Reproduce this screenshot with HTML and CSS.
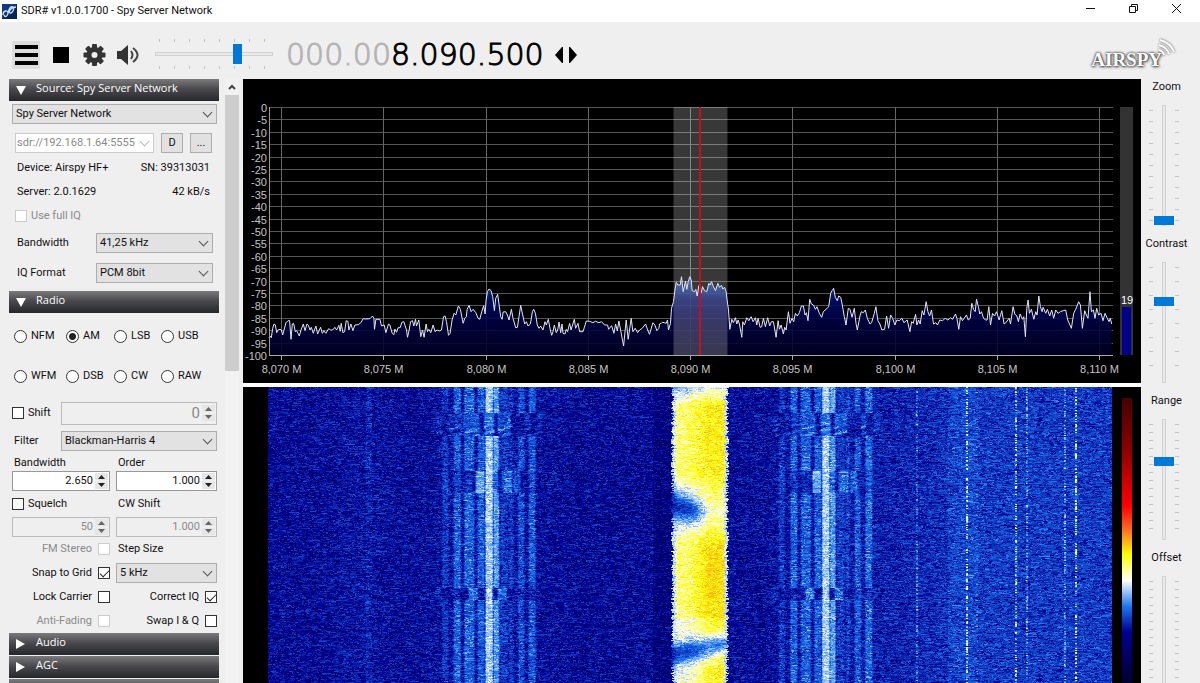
FILE: index.html
```html
<!DOCTYPE html>
<html lang="en">

<head>
    <meta charset="UTF-8">
    <title>SDR# v1.0.0.1700 - Spy Server Network</title>
    <link rel="stylesheet" href="styles.css">
</head>

<body>
    <svg width="0" height="0" class="defs">
        <symbol id="arrows" viewBox="0 0 13 16">
            <path d="M0 0H13V16H0Z" fill="#e6e6e6" />
            <path d="M0 8H13" stroke="#f8f8f8" />
            <path d="M3 6L6.500 2L10 6ZM3 10L6.500 14L10 10Z" fill="currentColor" />
        </symbol>
    </svg>
    <header class="titlebar">
        <svg class="app-icon" width="15" height="15" viewBox="0 0 15 15">
            <rect width="15" height="15" fill="#123a80" />
            <path d="M0 15L15 0V15Z" fill="#0b2458" />
            <path d="M1 11C1 6 6 6 6 9S3 14 2 11M6 9C7 4 9 2 11 3S10 10 8 9S9 3 14 3" fill="none" stroke="#cfe4ff" stroke-width="1.3" />
        </svg>
        <h1 class="app-title">SDR# v1.0.0.1700 - Spy Server Network</h1>
        <div class="window-buttons">
            <button type="button" aria-label="Minimize"><svg width="11" height="11" viewBox="0 0 11 11"><path d="M1 5.5H10" /></svg></button>
            <button type="button" aria-label="Restore"><svg width="11" height="11" viewBox="0 0 11 11"><path d="M1.500 3.500H7.500V9.500H1.500ZM3.500 3.500V1.500H9.500V7.500H7.500" /></svg></button>
            <button type="button" aria-label="Close"><svg width="11" height="11" viewBox="0 0 11 11"><path d="M1 1L10 10M10 1L1 10" /></svg></button>
        </div>
    </header>

    <div class="toolbar">
        <button class="tool menu" type="button" aria-label="Menu"><svg width="28" height="28" viewBox="0 0 28 28"><path d="M3 4H26V8H3ZM3 12H26V16H3ZM3 20H26V24H3Z" /></svg></button>
        <button class="tool" type="button" aria-label="Stop"><svg width="28" height="28" viewBox="0 0 28 28"><path d="M7 6H23V22H7Z" /></svg></button>
        <button class="tool" type="button" aria-label="Settings">
            <svg width="28" height="28" viewBox="0 0 28 28" fill="#333">
                <rect x="12" y="3" width="5" height="22" rx="1" />
                <rect x="12" y="3" width="5" height="22" rx="1" transform="rotate(45 14.500 14)" />
                <rect x="12" y="3" width="5" height="22" rx="1" transform="rotate(90 14.500 14)" />
                <rect x="12" y="3" width="5" height="22" rx="1" transform="rotate(135 14.500 14)" />
                <circle cx="14.500" cy="14" r="8" />
                <circle cx="14.500" cy="14" r="3" fill="#efefef" />
            </svg>
        </button>
        <button class="tool" type="button" aria-label="Mute">
            <svg width="28" height="28" viewBox="0 0 28 28">
                <path d="M3 10H7L14 4V24L7 18H3Z" fill="#333" />
                <path d="M17 10Q20 14 17 18M19 7Q28 14 19 21" fill="none" stroke="#444" stroke-width="2" />
            </svg>
        </button>
        <div class="volume"><input type="range" value="72" aria-label="Volume"></div>
        <div class="frequency"><span>000.00</span>8.090.500</div>
        <button class="tool step" type="button" aria-label="Tuning style"><svg width="24" height="18" viewBox="0 0 24 18"><path d="M9 1V17H8L1 9L8 1ZM15 1V17H16L23 9L16 1Z" /></svg></button>
        <div class="brand">AIRSPY
            <svg width="20" height="20" viewBox="0 0 20 20"><path d="M3 12Q7 13 8 17M3 7Q11 9 13 16M4 2Q15 5 18 14" /></svg>
        </div>
    </div>

    <main class="workspace">
        <aside class="sidebar">
            <div class="panels">
                <h2 class="panel-title open">Source: Spy Server Network</h2>
                <div class="panel source">
                    <div class="select"><select aria-label="Source"><option>Spy Server Network</option></select></div>
                    <div class="address">
                        <div class="select off"><select aria-label="Server address" disabled><option>sdr://192.168.1.64:5555</option></select></div>
                        <button type="button">D</button>
                        <button type="button">...</button>
                    </div>
                    <div class="info"><span>Device: Airspy HF+</span><span>SN: 39313031</span></div>
                    <div class="info"><span>Server: 2.0.1629</span><span>42 kB/s</span></div>
                    <label class="info check off"><input type="checkbox" disabled>Use full IQ</label>
                    <div class="field"><label for="iqBandwidth">Bandwidth</label>
                        <div class="select"><select id="iqBandwidth"><option>41,25 kHz</option></select></div>
                    </div>
                    <div class="field"><label for="iqFormat">IQ Format</label>
                        <div class="select"><select id="iqFormat"><option>PCM 8bit</option></select></div>
                    </div>
                </div>

                <h2 class="panel-title open">Radio</h2>
                <div class="panel radio">
                    <div class="modes">
                        <label><input type="radio" name="mode">NFM</label>
                        <label><input type="radio" name="mode" checked>AM</label>
                        <label><input type="radio" name="mode">LSB</label>
                        <label><input type="radio" name="mode">USB</label>
                        <label><input type="radio" name="mode">WFM</label>
                        <label><input type="radio" name="mode">DSB</label>
                        <label><input type="radio" name="mode">CW</label>
                        <label><input type="radio" name="mode">RAW</label>
                    </div>
                    <div class="wide">
                        <label class="check"><input type="checkbox">Shift</label>
                        <div class="spin big off"><input type="text" value="0" aria-label="Shift value" disabled><svg><use href="#arrows" /></svg></div>
                    </div>
                    <div class="wide">
                        <label class="indent" for="filter">Filter</label>
                        <div class="select"><select id="filter"><option>Blackman-Harris 4</option></select></div>
                    </div>
                    <div class="pair caption"><label class="indent" for="bw">Bandwidth</label><label class="indent" for="order">Order</label></div>
                    <div class="pair">
                        <div class="spin"><input id="bw" type="text" value="2.650"><svg><use href="#arrows" /></svg></div>
                        <div class="spin"><input id="order" type="text" value="1.000"><svg><use href="#arrows" /></svg></div>
                    </div>
                    <div class="pair squelch"><label class="check"><input type="checkbox">Squelch</label><label class="indent" for="cw">CW Shift</label></div>
                    <div class="pair">
                        <div class="spin off"><input type="text" value="50" aria-label="Squelch level" disabled><svg><use href="#arrows" /></svg></div>
                        <div class="spin off"><input id="cw" type="text" value="1.000" disabled><svg><use href="#arrows" /></svg></div>
                    </div>
                    <div class="pair option"><label class="check end off">FM Stereo<input type="checkbox" disabled></label><label class="indent" for="stepSize">Step Size</label></div>
                    <div class="pair option"><label class="check end">Snap to Grid<input type="checkbox" checked></label>
                        <div class="select"><select id="stepSize"><option>5 kHz</option></select></div>
                    </div>
                    <div class="pair option"><label class="check end">Lock Carrier<input type="checkbox"></label><label class="check end">Correct IQ<input type="checkbox" checked></label></div>
                    <div class="pair option"><label class="check end off">Anti-Fading<input type="checkbox" disabled></label><label class="check end">Swap I &amp; Q<input type="checkbox"></label></div>
                </div>

                <h2 class="panel-title">Audio</h2>
                <h2 class="panel-title">AGC</h2>
                <h2 class="panel-title"></h2>
            </div>
            <div class="scrollbar">
                <svg width="14" height="16" viewBox="0 0 14 16"><path d="M4 10L7 7L10 10" /></svg>
                <div class="scroll-thumb"></div>
            </div>
        </aside>

        <section class="displays">
            <div class="spectrum"><svg id="spectrum"></svg></div>
            <div class="waterfall">
                <canvas id="waterfall"></canvas>
                <div class="palette"></div>
            </div>
        </section>

        <aside class="sliders">
            <label>Zoom<span class="track zoom"><input type="range" value="0"></span></label>
            <label>Contrast<span class="track contrast"><input type="range" value="69"></span></label>
            <label>Range<span class="track span"><input type="range" value="66"></span></label>
            <label>Offset<span class="track span"><input type="range" value="0"></span></label>
        </aside>
    </main>
    <script src="script.js"></script>
</body>

</html>
```
FILE: styles.css
```css
* {
    box-sizing: border-box;
    margin: 0;
    padding: 0;
}

body {
    display: flex;
    flex-direction: column;
    height: 100vh;
    overflow: hidden;
    background: #efefef;
    color: #111;
    font: 11px/16px Roboto, "Liberation Sans", sans-serif;
}

button,
input,
select {
    font: inherit;
    color: inherit;
}

.defs {
    display: none;
}

/* title bar */
.titlebar {
    display: flex;
    align-items: center;
    height: 22px;
    flex: none;
    padding-left: 2px;
    background: #fff;
}

.app-title {
    flex: 1;
    margin-left: 4px;
    font: 11px/20px Roboto, sans-serif;
}

.window-buttons {
    display: flex;
    padding-right: 2px;
}

.window-buttons button {
    width: 43px;
    height: 20px;
    border: 0;
    background: none;
}

.window-buttons path {
    fill: none;
    stroke: #111;
}

/* toolbar */
.toolbar {
    display: flex;
    align-items: center;
    height: 57px;
    flex: none;
    padding: 8px 24px 0 12px;
}

.tool {
    width: 28px;
    height: 28px;
    margin-right: 6px;
    border: 0;
    background: none;
}

.tool svg {
    display: block;
}

.tool.menu {
    background: #dcdcdc;
}

.tool.step {
    width: 24px;
    height: 18px;
    margin-left: 10px;
}

.volume {
    display: flex;
    align-items: center;
    width: 118px;
    height: 30px;
    margin: -2px 13px 0 7px;
    background:
        repeating-linear-gradient(90deg, #c4c4c4 0 1px, transparent 1px 15px) 4px 0 / 107px 3px no-repeat,
        repeating-linear-gradient(90deg, #c4c4c4 0 1px, transparent 1px 15px) 4px 100% / 107px 3px no-repeat;
}

.frequency {
    font: 200 30px/36px "DejaVu Sans Light", "DejaVu Sans", sans-serif;
    color: #000;
    -webkit-text-stroke: 1px currentColor;
}

.frequency span {
    color: #b4b4b4;
}

.brand {
    display: flex;
    margin: 10px 0 0 auto;
    font: bold 19px/24px "Liberation Serif", serif;
    color: #fff;
    text-shadow: 0 0 2px #444, 0 0 3px #444, 1px 1px 3px #666;
}

.brand svg {
    margin: -10px 0 0 -6px;
    fill: none;
    stroke: #fff;
    stroke-width: 2;
    filter: drop-shadow(0 0 1px #444);
}

/* range inputs */
input[type="range"] {
    appearance: none;
    background: none;
    width: 100%;
    height: 20px;
}

input[type="range"]::-webkit-slider-runnable-track {
    height: 4px;
    border: 1px solid #d2d2d2;
    background: #e9e9e9;
}

input[type="range"]::-webkit-slider-thumb {
    appearance: none;
    width: 9px;
    height: 20px;
    margin-top: -9px;
    background: #0078d7;
}

.workspace {
    display: flex;
    flex: 1;
    min-height: 0;
}

/* left column */
.sidebar {
    display: flex;
    gap: 6px;
    width: 243px;
    flex: none;
    padding: 0 4px 0 9px;
    overflow: hidden;
}

.panels {
    flex: 1;
    min-width: 0;
}

.panel-title {
    display: flex;
    align-items: center;
    height: 22px;
    margin-bottom: 1px;
    padding: 0 0 4px 27px;
    position: relative;
    background: linear-gradient(#7a7a7c, #4a4a4e 45%, #26272b);
    color: #fff;
    font: 500 11px/18px "Open Sans", sans-serif;
}

.panel-title.open {
    margin-bottom: 0;
}

.panel-title::before {
    content: "";
    position: absolute;
    left: 7px;
    top: 6px;
    border: 5px solid transparent;
    border-left: 9px solid #fff;
    border-right: 0;
}

.panel-title.open::before {
    top: 7px;
    border: 5px solid transparent;
    border-top: 9px solid #fff;
    border-bottom: 0;
}

.panel {
    padding: 3px 2px 0 3px;
}

.panel.source {
    padding-bottom: 3px;
}

.select {
    position: relative;
    height: 20px;
    min-width: 0;
}

.select select {
    appearance: none;
    width: 100%;
    height: 20px;
    padding: 0 18px 0 3px;
    border: 1px solid #adadad;
    border-radius: 0;
    background: #e2e2e2;
    opacity: 1;
}

.select::after {
    content: "";
    position: absolute;
    right: 6px;
    top: 5px;
    width: 6px;
    height: 6px;
    border: solid #555;
    border-width: 0 1px 1px 0;
    transform: rotate(45deg);
}

.off,
.off input,
.off select {
    color: #8a8a8a;
}

.select.off select {
    padding: 0 14px 0 1px;
    border-color: #ccc;
    background: #fff;
}

.select.off::after {
    border-color: #bbb;
}

.address {
    display: flex;
    gap: 7px;
    margin: 9px 5px 3px 3px;
}

.address .select {
    flex: 1;
}

.address button {
    width: 22px;
    height: 20px;
    flex: none;
    border: 1px solid #adadad;
    background: #e1e1e1;
}

.info {
    display: flex;
    justify-content: space-between;
    align-items: center;
    height: 24px;
    padding: 0 7px 0 5px;
    white-space: nowrap;
}

.info.check {
    justify-content: flex-start;
    padding-left: 3px;
}

.check {
    display: flex;
    align-items: center;
    gap: 4px;
}

.check.end {
    justify-content: flex-end;
    gap: 6px;
}

input[type="checkbox"] {
    appearance: none;
    width: 12px;
    height: 12px;
    flex: none;
    border: 1px solid #333;
    background: #fff;
}

input[type="checkbox"]:disabled {
    border-color: #ccc;
}

input[type="checkbox"]:checked::before {
    content: "";
    display: block;
    width: 8px;
    height: 4px;
    margin: 2px 0 0 1px;
    border: solid #222;
    border-width: 0 0 1px 1px;
    transform: rotate(-45deg);
}

.field {
    display: flex;
    align-items: center;
    justify-content: space-between;
    height: 30px;
    padding: 0 4px 0 5px;
}

.field .select {
    width: 117px;
}

.modes {
    display: grid;
    grid-template-columns: 52px 48px 47px 1fr;
    grid-auto-rows: 40px;
    margin-bottom: 3px;
    padding-left: 2px;
}

.modes label {
    display: flex;
    align-items: center;
    gap: 4px;
}

input[type="radio"] {
    appearance: none;
    width: 13px;
    height: 13px;
    flex: none;
    border: 1px solid #333;
    border-radius: 50%;
    background: #fff;
}

input[type="radio"]:checked {
    background: radial-gradient(#222 3px, #fff 4px);
}

.wide {
    display: grid;
    grid-template-columns: 49px minmax(0, 1fr);
    align-items: center;
    height: 28px;
}

.indent {
    padding-left: 2px;
}

.pair {
    display: grid;
    grid-template-columns: 98px minmax(0, 1fr);
    column-gap: 6px;
    align-items: center;
    height: 20px;
}

.pair.caption {
    height: 16px;
}

.pair.squelch {
    height: 26px;
}

.pair.option {
    height: 24px;
}

.spin {
    display: flex;
    align-items: center;
    height: 20px;
    border: 1px solid #999;
    background: #fff;
}

.spin input {
    flex: 1;
    min-width: 0;
    border: 0;
    background: none;
    text-align: right;
}

.spin svg {
    width: 13px;
    height: 16px;
    flex: none;
    margin: 0 1px 0 2px;
    color: #222;
}

.spin.off {
    border-color: #bbb;
    background: #efefef;
}

.spin.off svg {
    color: #666;
}

.spin.big {
    height: 23px;
    font-size: 15px;
}

.scrollbar {
    width: 14px;
    flex: none;
    background: #f2f2f2;
}

.scrollbar svg {
    display: block;
    fill: none;
    stroke: #444;
    stroke-width: 2;
}

.scroll-thumb {
    height: 276px;
    background: #cdcdcd;
}

/* spectrum and waterfall */
.displays {
    display: flex;
    flex-direction: column;
    flex: 1;
    gap: 4px;
    min-width: 0;
    background: #fff;
}

.spectrum {
    height: 304px;
    flex: none;
    background: #000;
}

.spectrum svg {
    display: block;
    width: 100%;
    height: 100%;
    font: 11px "Liberation Sans", sans-serif;
    fill: #c4c4c4;
}

.waterfall {
    display: flex;
    flex: 1;
    min-height: 0;
    padding-left: 25px;
    background: #000;
}

.waterfall canvas {
    flex: 1;
    min-width: 0;
    height: 100%;
}

.palette {
    width: 10px;
    margin: 11px 9px 0 10px;
    background: linear-gradient(#450000, #8b0000 18%, #f00 38%, #ff6a20 46%, #ff0 55%, #fff 64%, #1e78f0 73%, #000091 82%, #000030);
}

/* right column */
.sliders {
    width: 59px;
    flex: none;
    overflow: hidden;
}

.sliders label {
    display: flex;
    flex-direction: column;
    align-items: center;
    height: 157px;
    padding-right: 8px;
}

.track {
    display: flex;
    justify-content: center;
    width: 30px;
    height: 121px;
    margin: 10px 6px 0 0;
    --step: 11px;
    background:
        repeating-linear-gradient(#c4c4c4 0 1px, transparent 1px var(--step)) 0 5px / 4px 111px no-repeat,
        repeating-linear-gradient(#c4c4c4 0 1px, transparent 1px var(--step)) 100% 5px / 4px 111px no-repeat;
}

.track.contrast {
    --step: 14px;
}

.track.span {
    --step: 8px;
}

.track input[type="range"] {
    writing-mode: vertical-lr;
    direction: rtl;
    width: 20px;
    height: 121px;
}

.track input[type="range"]::-webkit-slider-runnable-track {
    width: 4px;
    height: 121px;
}

.track input[type="range"]::-webkit-slider-thumb {
    width: 20px;
    height: 9px;
    margin: 0 0 0 -9px;
}
```
FILE: script.js
```js
// trace samples as x,y pairs, three units to a pixel
var lower = [86,262,90,258,94,263,98,235,102,222,106,224,110,248,114,240,120,238,124,240,128,255,132,240,138,218,144,212,149,212,153,268,157,222,161,220,166,245,170,242,174,250,178,258,183,240,190,222,195,242,201,222,205,226,210,240,214,232,220,250,228,228,233,252,242,232,247,250,252,242,258,250,266,236,272,240,278,240,285,232,290,240,297,226,301,244,304,220,309,248,314,245,319,212,324,214,327,240,333,222,339,242,345,225,355,224,363,218,370,206,378,207,390,206,398,198,402,205,404,238,408,208,420,208,425,228,433,225,438,248,446,222,450,225,457,250,462,254,465,237,470,247,475,233,481,233,486,217,492,215,500,240,503,262,508,240,512,215,518,212,522,228,527,208,530,228,537,210,543,260,548,240,553,262,559,222,563,245,567,238,573,248,580,225,586,245,592,240,600,243,605,240,611,200,616,198,620,215,626,256,631,250,637,210,643,190,648,195,656,168,662,178,670,220,675,205,680,200,682,178,688,166,694,185,700,178,708,188,715,205,720,208,726,185,732,167,736,192,739,150,743,125,748,117,754,122,759,140,764,182,768,145,774,133,778,165,783,200,787,208,790,186,798,185,803,195,808,210,815,178,820,205,828,233,833,232,838,200,843,166,849,195,855,222,860,215,865,228,872,222,878,185,882,178,887,190,893,225,898,235,903,228,910,240,916,215,920,225,926,208,932,240,936,256,940,245,944,225,950,248,954,240,958,216,963,248,967,222,970,250,976,252,980,238,984,245,990,220,994,240,1004,208,1008,235,1015,220,1020,245,1030,245,1040,213,1050,214,1060,218,1068,214,1078,218,1086,215,1095,225,1104,225,1107,238,1116,227,1123,250,1128,222,1133,243,1138,213,1143,240,1152,288,1160,210,1166,268,1175,205,1180,245,1187,235,1194,248,1200,240,1208,235,1218,222,1224,240,1230,253,1240,218,1246,225,1252,242,1258,235];
var upper = [0,222,5,220,8,217,15,218,20,220,24,210,27,240,33,220,36,175,42,155,46,120,50,97,55,105,62,105,66,80,71,125,78,93,82,118,86,95,91,80,95,90,98,122,105,125,109,118,113,138,118,107,122,115,125,128,129,110,135,122,142,125,148,100,152,105,156,95,162,110,168,122,175,100,180,112,186,106,190,117,195,112,200,125,203,150,207,180,211,238,217,208,222,218,228,203,232,222,236,210,240,222,247,262,250,215,255,225,262,203,268,212,275,200,281,215,288,203,292,225,296,205,302,232,307,230,312,205,318,230,325,203,331,228,336,215,342,215,350,262,356,212,360,238,365,225,372,252,376,232,380,240,387,185,392,220,398,205,403,215,408,190,414,198,420,188,426,168,432,168,437,195,441,188,446,212,451,148,456,162,462,165,468,178,473,170,480,190,487,202,492,185,500,178,508,170,514,130,518,122,523,115,528,142,534,152,538,138,544,142,549,165,555,200,560,225,567,175,572,178,578,202,585,175,590,220,594,240,602,198,606,185,612,188,618,180,624,205,632,222,637,218,645,190,650,170,656,212,662,222,668,240,676,238,682,198,688,235,694,195,700,205,707,225,713,210,720,212,728,205,734,218,744,210,752,245,757,215,762,220,769,193,773,225,778,210,783,222,789,182,794,195,801,155,806,185,811,198,817,180,823,222,830,218,835,225,842,210,850,212,858,205,866,210,874,203,880,208,889,192,893,205,899,238,904,200,910,212,915,205,922,195,927,210,933,205,938,160,943,178,948,185,952,148,958,172,962,192,967,185,973,205,980,210,984,210,989,170,994,225,1000,190,1006,198,1012,185,1020,210,1028,182,1035,222,1040,218,1050,205,1054,222,1062,170,1067,192,1073,198,1078,215,1083,192,1090,208,1094,200,1099,260,1103,175,1107,150,1111,190,1117,178,1124,208,1130,185,1134,195,1139,138,1144,170,1149,185,1152,172,1160,190,1165,178,1172,198,1178,180,1184,205,1190,180,1197,190,1204,185,1212,182,1220,180,1226,210,1237,235,1244,190,1250,178,1259,155,1264,165,1270,235,1277,182,1282,195,1287,205,1293,125,1297,185,1303,180,1308,205,1313,175,1319,195,1326,190,1332,212,1338,190,1345,205,1350,215,1354,205,1358,222];

var SPAN = 845;

function line(x1, y1, x2, y2, color) {
    return '<path d="M' + x1 + ' ' + y1 + 'L' + x2 + ' ' + y2 + '" stroke="' + color + '"/>';
}

function drawSpectrum() {
    var svg = document.querySelector('#spectrum');
    var left = 26, top = 28, height = 248;
    var width = svg.clientWidth - left - 28;
    var k = width / SPAN;
    var right = left + width;
    var bottom = top + height;
    var out = '<defs><linearGradient id="fill" gradientUnits="userSpaceOnUse" x1="0" x2="0" y1="' + (top + 165) + '" y2="' + bottom + '">' +
        '<stop offset="0" stop-color="#2468c0"/><stop offset=".35" stop-color="#000c66"/><stop offset=".6" stop-color="#000044"/><stop offset="1" stop-color="#000024"/></linearGradient></defs>';
    // grid
    for (var db = 0; db <= 100; db += 5) {
        var y = Math.round(top + db * height / 100) + .5;
        out += line(left, y, right, y, '#555');
        out += '<text x="' + (left - 2) + '" y="' + (y + 4) + '" text-anchor="end">' + (db ? -db : 0) + '</text>';
    }
    var ticks = [];
    for (var i = 0; i < 9; i++) {
        ticks.push(Math.round(left + (12 + i * 102.4) * k) + .5);
        out += line(ticks[i], top, ticks[i], bottom, '#666');
    }
    // trace
    var d = '';
    for (i = 0; i < lower.length; i += 2) {
        d += 'L' + (left + (lower[i] / 3 - 29) * k).toFixed(1) + ' ' + (top + 143 + lower[i + 1] / 3).toFixed(1);
    }
    for (i = 0; i < upper.length; i += 2) {
        d += 'L' + (left + (391 + upper[i] / 3) * k).toFixed(1) + ' ' + (top + 143 + upper[i + 1] / 3).toFixed(1);
    }
    d = 'M' + d.slice(1);
    out += '<path d="' + d + 'V' + bottom + 'H' + left + 'Z" fill="url(#fill)" fill-opacity=".88"/>';
    out += '<rect x="' + (left + 405 * k) + '" y="' + top + '" width="' + 54 * k + '" height="' + height + '" fill="#fff" fill-opacity=".22"/>';
    out += '<path d="' + d + '" fill="none" stroke="#e4e4f4"/>';
    // tuned frequency
    out += '<rect x="' + Math.round(left + 431 * k) + '" y="' + top + '" width="2" height="' + height + '" fill="#c8101c"/>';
    // axes
    out += line(left + .5, top, left + .5, bottom, '#999') + line(left, bottom + .5, right, bottom + .5, '#aaa');
    for (i = 0; i < 9; i++) {
        out += line(ticks[i], bottom, ticks[i], bottom + 5, '#aaa');
        out += '<text x="' + ticks[i] + '" y="' + (bottom + 18) + '" text-anchor="middle">8,' + (i < 6 ? '0' + (70 + i * 5) : 70 + i * 5) + ' M</text>';
    }
    // signal meter
    out += '<rect x="' + (right + 7) + '" y="' + top + '" width="13" height="' + height + '" fill="#333"/>';
    out += '<rect x="' + (right + 9) + '" y="' + (bottom - 48) + '" width="9" height="48" fill="#00008b"/>';
    out += '<text x="' + (right + 14) + '" y="' + (bottom - 51) + '" text-anchor="middle" fill="#fff">19</text>';
    svg.innerHTML = out;
}

// level -> colour
var stops = [[0, 0, 0, 90], [.15, 0, 0, 145], [.42, 30, 120, 240], [.64, 250, 252, 255], [.8, 255, 255, 20], [1, 255, 150, 0]];

function color(v) {
    v = Math.max(0, Math.min(1, v));
    for (var i = 1; i < stops.length - 1 && v > stops[i][0]; i++);
    var a = stops[i - 1], b = stops[i], t = (v - a[0]) / (b[0] - a[0]);
    return [a[1] + (b[1] - a[1]) * t, a[2] + (b[2] - a[2]) * t, a[3] + (b[3] - a[3]) * t];
}

// centre, width, strength
var normal = [[177, 4, .1], [189, 5, .18], [201, 8, .18], [213, 5, .16], [221, 6, .36], [228, 4, .28], [236, 6, .08], [243, 2, .08], [253, 4, .14], [264, 5, .17]];
var shifted = [[177, 4, .12], [189, 5, .1], [201, 4, .06], [212, 7, .3], [221, 6, .36], [227, 4, .2], [239, 8, .2], [249, 5, .15], [264, 4, .13]];
var dip = [[170, 6, .07], [188, 4, .06], [205, 7, .22], [221, 5, .36], [234, 7, .2], [253, 4, .08], [264, 4, .05]];
var torn = [[171, 3, .07], [182, 3, .07], [190, 5, .09], [203, 14, .14], [221, 8, .2], [236, 11, .14], [259, 3, .08], [272, 3, .06]];
var dotted = [[649, 2, .16], [699, 2, .24], [709, 2, .08], [748, 2, .24], [759, 2, .16], [797, 2, .16], [808, 2, .28]];

function stripes(list, shift, x) {
    var v = 0;
    for (var i = 0; i < list.length; i++) {
        // full strength inside, falling off over two pixels
        var far = Math.abs(x - list[i][0] - shift) - list[i][1] / 2;
        v = Math.max(v, list[i][2] * Math.max(0, Math.min(1, 1 - far / 2)));
    }
    return v;
}

function band(x, y) {
    // modulated signal with two fades
    var v = .74 + .09 * Math.max(0, Math.min(1, (x - 418) / 22)) - .012 * Math.max(0, 411 - x);
    v -= .2 * Math.max(0, 1 - y / 18);
    v -= .16 * Math.max(0, 1 - Math.abs(y - 122) / 38);
    v -= .32 * Math.exp(-Math.pow((y - 121 + (420 - x) * .3) / 13, 2)) * Math.max(0, Math.min(1, (442 - x) / 20));
    v -= .36 * Math.exp(-Math.pow((y - 262 - (430 - x) * .22) / 11, 2));
    if (y > 230) v -= .08 * Math.min(1, (460 - x) / 30);
    v += .04 * Math.exp(-Math.pow((y - 185) / 35, 2)) * Math.max(0, Math.min(1, (x - 425) / 15));
    return v;
}

function drawWaterfall() {
    var canvas = document.querySelector('#waterfall');
    var w = canvas.width = canvas.clientWidth;
    var h = canvas.height = canvas.clientHeight;
    var ctx = canvas.getContext('2d');
    var img = ctx.createImageData(w, h);
    var seed = 7;
    function rnd() {
        seed = (seed * 1664525 + 1013904223) >>> 0;
        return seed / 4294967296;
    }
    for (var y = 0; y < h; y++) {
        var list = normal;
        if (y > 25 && y < 49) list = torn;
        if (y >= 84 && y < 106) list = shifted;
        if (y >= 201 && y < 213) list = dip;
        var dots = [];
        for (var i = 0; i < dotted.length; i++) dots.push(rnd() > .55 ? 1.2 : .1);
        var edge = rnd() * 3;
        var noise = 0;
        for (var px = 0; px < w; px++) {
            var x = px * SPAN / w;
            // short horizontal streaks
            if (rnd() > .45) noise = (rnd() + rnd()) / 2 - .5;
            var v, amp = .36;
            if (x > 403 + edge && x < 461 - edge) {
                v = band(x, y);
                if (x < 406 + edge || x > 458 - edge) v = Math.min(v, .58);
                amp = .24;
            } else {
                v = .16 + .12 * Math.max(0, Math.min(1, (x - 560) / 150));
                if (x > 385 && x < 404) v = .1;
                v += .03 * Math.exp(-Math.pow((x - 95) / 28, 2)) + .04 * Math.exp(-Math.pow((x - 221) / 60, 2)) + .04 * Math.exp(-Math.pow((x - 558) / 60, 2));
                if (Math.abs(x - 101) < 3) v += .04;
                if (Math.abs(x - 694) < 14) v += .04;
                var s = stripes(list, 0, x) + stripes(list, 337, x);
                if (list === torn && s && y > 38) s += .08 * Math.sin(x * .25 + y * .9);
                v += s;
                for (i = 0; i < dotted.length; i++) {
                    if (Math.abs(x - dotted[i][0]) < dotted[i][1] / 2) v += dotted[i][2] * dots[i];
                }
                if (s > .25) amp = .24;
            }
            var c = color(v + noise * amp);
            var p = (y * w + px) * 4;
            img.data[p] = c[0];
            img.data[p + 1] = c[1];
            img.data[p + 2] = c[2];
            img.data[p + 3] = 255;
        }
    }
    ctx.putImageData(img, 0, 0);
}

function draw() {
    drawSpectrum();
    drawWaterfall();
}

window.addEventListener('resize', draw);
draw();
```
